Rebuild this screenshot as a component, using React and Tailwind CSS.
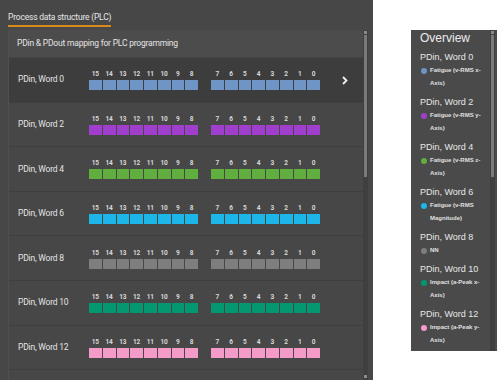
import React from 'react';

const words = [
  { word: 0, color: 'bg-[#6e95c6]', desc: ['Fatigue (v-RMS x-', 'Axis)'] },
  { word: 2, color: 'bg-[#a03fce]', desc: ['Fatigue (v-RMS y-', 'Axis)'] },
  { word: 4, color: 'bg-[#5fae3e]', desc: ['Fatigue (v-RMS z-', 'Axis)'] },
  { word: 6, color: 'bg-[#1cb6e8]', desc: ['Fatigue (v-RMS', 'Magnitude)'] },
  { word: 8, color: 'bg-[#7e7e7e]', desc: ['NN'] },
  { word: 10, color: 'bg-[#03986f]', desc: ['Impact (a-Peak x-', 'Axis)'] },
  { word: 12, color: 'bg-[#f59bc9]', desc: ['Impact (a-Peak y-', 'Axis)'] },
];

const BitGroup = ({ bits, color }) => (
  <div className="flex gap-px">
    {bits.map((b) => (
      <div key={b} className="flex flex-col items-center w-[12.75px]">
        <span className="text-[6.5px] leading-[6px] text-[#d8d8d8] font-bold mb-[3px]">{b}</span>
        <div className={`w-full h-[10px] ${color}`} />
      </div>
    ))}
  </div>
);

const WordRow = ({ word, color, active }) => (
  <div
    className={`flex items-center h-[44.6px] border-b border-[#3f3f3f] ${
      active ? 'bg-[#3d3d3d]' : 'bg-[#474747]'
    }`}
  >
    <div className="w-[80px] pl-[9px] text-[8.5px] tracking-[-0.2px] text-[#e4e4e4]">PDin, Word {word}</div>
    <div className="flex gap-[13px] pt-[2px]">
      <BitGroup bits={[15, 14, 13, 12, 11, 10, 9, 8]} color={color} />
      <BitGroup bits={[7, 6, 5, 4, 3, 2, 1, 0]} color={color} />
    </div>
    {active && (
      <svg className="ml-[22px] mt-[1px]" width="6" height="9" viewBox="0 0 6 9">
        <path d="M1 1 L4.5 4.5 L1 8" fill="none" stroke="#f2f2f2" strokeWidth="1.8" />
      </svg>
    )}
  </div>
);

export default function App() {
  return (
    <div className="w-[500px] h-[380px] bg-white flex" style={{ fontFamily: 'Roboto, "Liberation Sans", sans-serif' }}>
      {/* left panel */}
      <div className="w-[373px] h-full bg-[#474747] flex flex-col">
        <div className="pl-2 pt-[3px] h-[30px]">
          <span className="inline-block text-[8.5px] tracking-[-0.2px] leading-[13px] text-[#e6e6e6] border-b-2 border-[#d98a1c] pb-[1px]">
            Process data structure (PLC)
          </span>
        </div>
        <div className="ml-2 mr-[5px] flex-1 flex min-h-0 border-l border-[#505050]">
          <div className="flex-1 flex flex-col overflow-hidden">
            <div className="h-[28px] flex items-center pl-[8px] bg-[#4c4c4c] border-b border-[#444444] text-[8.5px] tracking-[-0.2px] text-[#e4e4e4]">
              PDin &amp; PDout mapping for PLC programming
            </div>
            {words.map((w, i) => (
              <WordRow key={w.word} word={w.word} color={w.color} active={i === 0} />
            ))}
          </div>
          <div className="w-[5px] bg-[#3f3f3f] flex flex-col items-center pt-[1px] pb-[2px]">
            <div className="w-[3px] h-[3px] bg-[#8a8a8a]" />
            <div className="w-[3px] h-[142px] bg-[#7a7a7a] mt-[1px]" />
            <div className="flex-1" />
            <div className="w-[3px] h-[3px] bg-[#8a8a8a]" />
          </div>
        </div>
      </div>

      {/* right overview panel */}
      <div className="ml-[38px] mt-[30px] w-[86px] h-[321px] bg-[#4a4a4a] flex" style={{ fontFamily: '"Liberation Sans", Arial, sans-serif' }}>
        <div className="flex-1 pl-[9px] pt-[1px] overflow-hidden">
          <div className="text-[12px] leading-[14px] text-[#ececec]">Overview</div>
          {words.map((w) => (
            <div key={w.word} className="pt-[6px]">
              <div className="text-[9px] leading-[13px] text-[#e8e8e8]">PDin, Word {w.word}</div>
              <div className="flex items-start">
                <span className={`w-[6px] h-[6px] rounded-full mt-[3.5px] ml-[1px] shrink-0 ${w.color}`} />
                <div className="ml-[3px] text-[6px] leading-[13px] font-bold text-[#e0e0e0]">
                  {w.desc.map((d) => (
                    <div key={d}>{d}</div>
                  ))}
                </div>
              </div>
            </div>
          ))}
        </div>
        <div className="w-[5px] mr-[2px] bg-[#3f3f3f] flex flex-col items-center pt-[1px]">
          <div className="w-[3px] h-[3px] bg-[#8a8a8a]" />
          <div className="w-[3px] h-[142px] bg-[#7a7a7a] mt-[1px]" />
        </div>
      </div>
    </div>
  );
}
